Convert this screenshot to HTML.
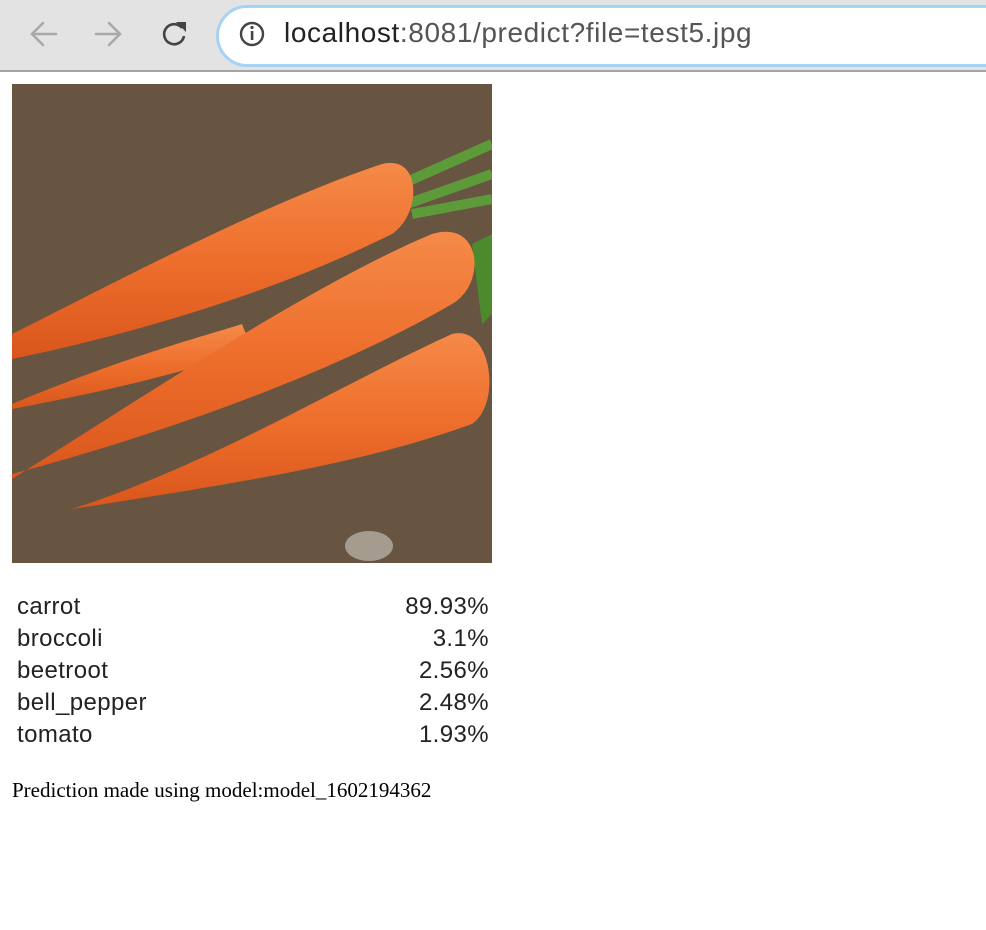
<!DOCTYPE html>
<html><head><style>
body{margin:0;width:986px;height:930px;background:#fff;overflow:hidden;position:relative;font-family:"Liberation Sans",sans-serif}
.bar{position:absolute;left:0;top:0;width:986px;height:70px;background:#e3e3e3;border-bottom:2px solid #a4a4a4}
.addr{position:absolute;left:216px;top:5px;width:800px;height:56px;border:3px solid #a6d2f4;border-radius:31px;background:#fff}
.url{position:absolute;left:284px;top:17px;font-size:28px;letter-spacing:0.6px;color:#222}
.url span{color:#555}
.row{position:absolute;left:17px;width:472px;font-size:24px;letter-spacing:0.4px;color:#222;display:flex;justify-content:space-between}
.foot{position:absolute;left:12px;top:778px;font-family:"Liberation Serif",serif;font-size:21px;color:#000}
</style></head><body>
<div class="bar"></div>
<div class="addr"></div>
<svg width="986" height="70" style="position:absolute;left:0;top:0">
<g stroke="#a8a8a8" stroke-width="2.5" fill="none" stroke-linecap="round">
<path d="M56 34H32M43 23L32 34L43 45"/>
<path d="M96 34H120M109 23L120 34L109 45"/>
</g>
<path d="M182 28A10 10 0 1 0 184 36" stroke="#444" stroke-width="2.6" fill="none"/>
<path d="M176 22L186 22L186 32Z" fill="#444"/>
<circle cx="252" cy="34" r="11" stroke="#444" stroke-width="2.4" fill="none"/>
<rect x="250.8" y="31" width="2.6" height="9" fill="#444"/><circle cx="252" cy="27.5" r="1.6" fill="#444"/>
</svg>
<div class="url">localhost<span>:8081/predict?file=test5.jpg</span></div>
<svg width="480" height="479" style="position:absolute;left:12px;top:84px">
<defs>
<linearGradient id="c" x1="0" y1="0" x2="0" y2="1"><stop offset="0" stop-color="#f58a48"/><stop offset=".5" stop-color="#ee6e2c"/><stop offset="1" stop-color="#d9561c"/></linearGradient>
</defs>
<rect width="480" height="479" fill="#6e5a45"/>
<rect width="480" height="479" fill="#5b4a38" opacity=".3"/>
<path d="M390 100L480 60M395 120L480 90M400 130L480 115" stroke="#5c9a3a" stroke-width="10"/>
<path d="M460 160L480 150L480 230L470 240Z" fill="#4c8a2e"/>
<path d="M0 250C100 200 250 120 370 80C410 70 410 130 380 150C260 210 120 250 0 275Z" fill="url(#c)"/>
<path d="M0 320C120 270 200 250 230 240L240 265C170 290 80 310 0 325Z" fill="url(#c)"/>
<path d="M0 395C120 320 300 200 420 150C470 135 475 200 440 220C320 290 150 350 0 390Z" fill="url(#c)"/>
<path d="M60 425C200 380 330 300 440 250C480 240 490 320 460 340C350 380 220 400 60 425Z" fill="url(#c)"/>
<ellipse cx="357" cy="462" rx="24" ry="15" fill="#a59c8f"/>
</svg>
<div class="row" style="top:593px"><span>carrot</span><span>89.93%</span></div>
<div class="row" style="top:625px"><span>broccoli</span><span>3.1%</span></div>
<div class="row" style="top:657px"><span>beetroot</span><span>2.56%</span></div>
<div class="row" style="top:689px"><span>bell_pepper</span><span>2.48%</span></div>
<div class="row" style="top:721px"><span>tomato</span><span>1.93%</span></div>
<div class="foot">Prediction made using model:model_1602194362</div>
</body></html>
